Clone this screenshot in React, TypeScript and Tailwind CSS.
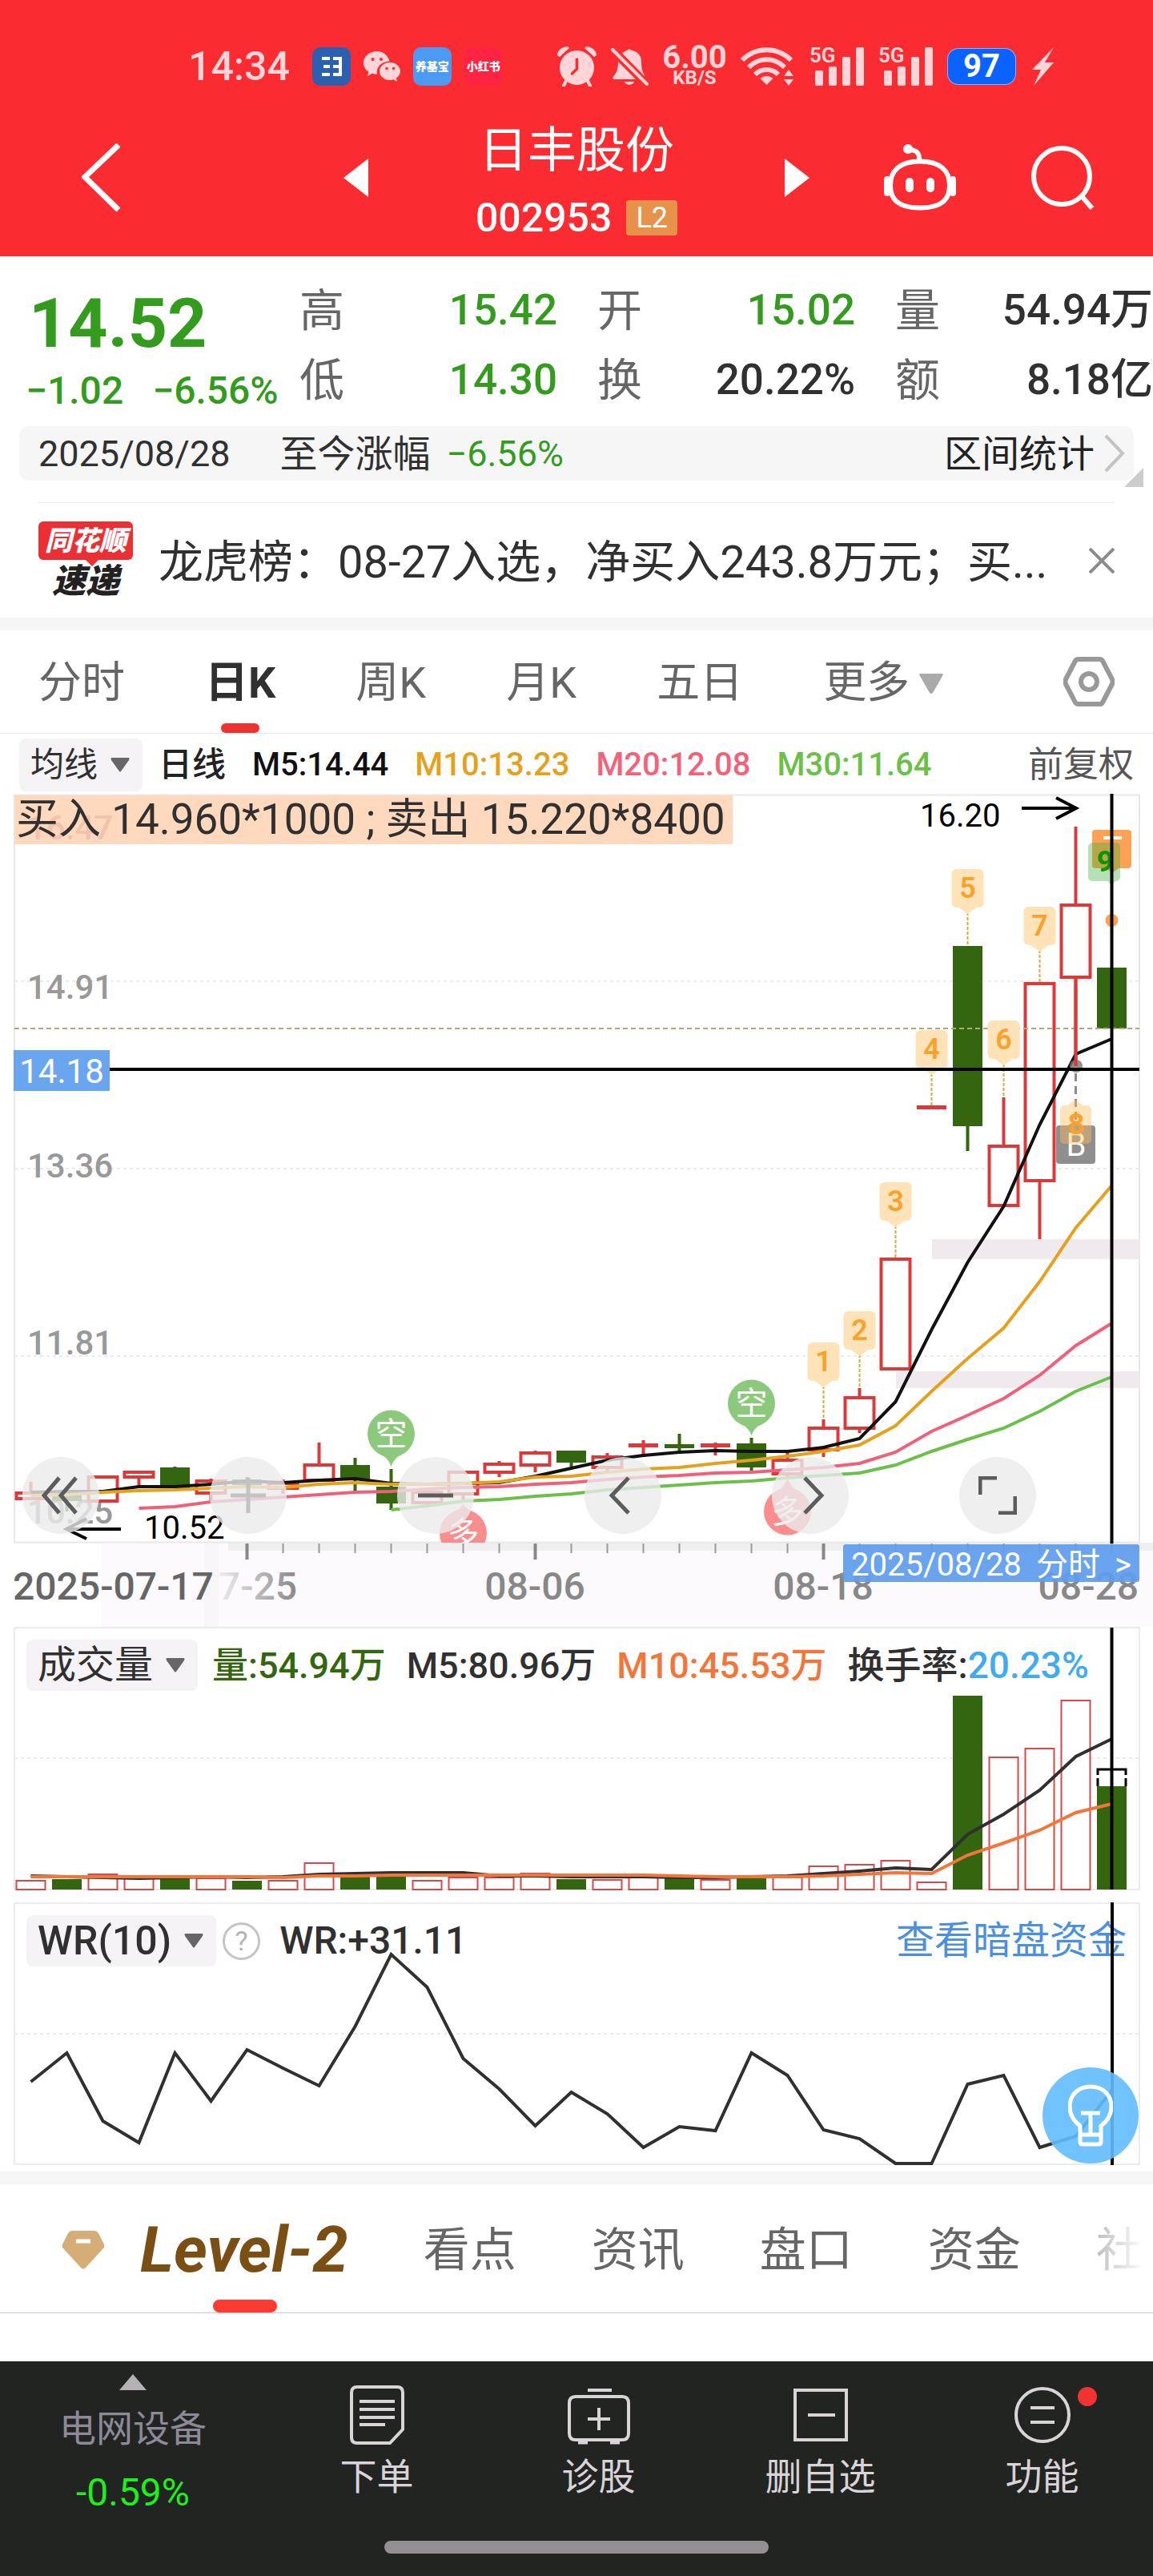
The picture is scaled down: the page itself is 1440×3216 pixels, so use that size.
import type { ReactNode } from "react";
import { clsx } from "clsx";

const RED = "#dc3a3a";
const GREEN = "#33660f";

type Candle = {
  kind: "up" | "down" | "flatUp" | "flatDown";
  top: number;
  bottom: number;
  high?: number;
  low?: number;
};

// vertical positions in chart units, one entry per trading day
const candles: Candle[] = [
  { kind: "up", top: 1862, bottom: 1873, high: 1850 },
  { kind: "down", top: 1866, bottom: 1874, low: 1887 },
  { kind: "up", top: 1842, bottom: 1876 },
  { kind: "up", top: 1836, bottom: 1846, low: 1856 },
  { kind: "down", top: 1832, bottom: 1858, high: 1831 },
  { kind: "up", top: 1847, bottom: 1866, high: 1846, low: 1873 },
  { kind: "down", top: 1847, bottom: 1854, high: 1844, low: 1857 },
  { kind: "up", top: 1850, bottom: 1860, high: 1847, low: 1865 },
  { kind: "up", top: 1827, bottom: 1850, high: 1801 },
  { kind: "down", top: 1829, bottom: 1848, high: 1820, low: 1862 },
  { kind: "down", top: 1856, bottom: 1877, high: 1834, low: 1885 },
  { kind: "up", top: 1861, bottom: 1878, high: 1859, low: 1882 },
  { kind: "up", top: 1836, bottom: 1867, low: 1873 },
  { kind: "up", top: 1826, bottom: 1840, high: 1824, low: 1844 },
  { kind: "up", top: 1812, bottom: 1831, high: 1811, low: 1838 },
  { kind: "down", top: 1811, bottom: 1826, low: 1832 },
  { kind: "up", top: 1817, bottom: 1834, high: 1814, low: 1837 },
  { kind: "flatUp", top: 1804, bottom: 1804, high: 1798, low: 1819 },
  { kind: "flatDown", top: 1805, bottom: 1805, high: 1790, low: 1815 },
  { kind: "flatUp", top: 1804, bottom: 1804, high: 1801, low: 1817 },
  { kind: "down", top: 1802, bottom: 1832, high: 1795, low: 1836 },
  { kind: "up", top: 1821, bottom: 1842, high: 1813, low: 1845 },
  { kind: "up", top: 1781, bottom: 1812, high: 1772, low: 1819 },
  { kind: "up", top: 1743, bottom: 1785, high: 1733, low: 1789 },
  { kind: "up", top: 1570, bottom: 1711 },
  { kind: "flatUp", top: 1382, bottom: 1382 },
  { kind: "down", top: 1181, bottom: 1406, low: 1437 },
  { kind: "up", top: 1429, bottom: 1507, high: 1370 },
  { kind: "up", top: 1226, bottom: 1476, low: 1547 },
  { kind: "up", top: 1128, bottom: 1222, high: 1032, low: 1331 },
  { kind: "down", top: 1208, bottom: 1284 }
];

const ma5 = [1863, 1862, 1862, 1856, 1856, 1853, 1849, 1851, 1848, 1846, 1852, 1853, 1852, 1851, 1843, 1833, 1823, 1817, 1813, 1811, 1812, 1812, 1807, 1796, 1750, 1660, 1576, 1506, 1404, 1316, 1297];
const ma10 = [1867, 1866, 1863, 1861, 1860, 1858, 1856, 1857, 1853, 1851, 1853, 1853, 1852, 1850, 1844, 1843, 1838, 1834, 1832, 1827, 1823, 1818, 1812, 1804, 1780, 1737, 1696, 1658, 1600, 1533, 1480];
const ma20 = [1883, 1881, 1875, 1872, 1869, 1866, 1863, 1862, 1859, 1857, 1856, 1853, 1851, 1847, 1844, 1842, 1839, 1838, 1835, 1832, 1827, 1813, 1787, 1767, 1746, 1717, 1680, 1652];
const ma30 = [1885, 1880, 1874, 1872, 1868, 1865, 1860, 1857, 1854, 1851, 1849, 1845, 1842, 1839, 1829, 1812, 1797, 1783, 1762, 1737, 1719];

const volumes = [2347, 2346, 2339, 2344, 2344, 2344, 2348, 2347, 2325, 2342, 2342, 2347, 2343, 2343, 2338, 2346, 2346, 2343, 2343, 2346, 2344, 2343, 2329, 2327, 2322, 2349, 2117, 2193, 2182, 2122, 2230];
const fallingVolumes = [1, 4, 6, 9, 10, 15, 18, 20, 26, 30];
const volMa5 = [2342, 2343, 2344, 2345, 2344, 2343, 2344, 2343, 2340, 2339, 2338, 2338, 2338, 2342, 2342, 2343, 2343, 2343, 2344, 2344, 2343, 2342, 2339, 2336, 2332, 2334, 2290, 2265, 2235, 2193, 2171];
const volMa10 = [2343, 2343, 2343, 2343, 2343, 2343, 2343, 2344, 2342, 2342, 2341, 2341, 2341, 2341, 2341, 2341, 2341, 2341, 2342, 2343, 2343, 2343, 2342, 2340, 2338, 2339, 2316, 2301, 2285, 2263, 2252];
const wr = [2599, 2563, 2648, 2675, 2563, 2623, 2559, 2582, 2604, 2530, 2440, 2481, 2570, 2608, 2654, 2612, 2639, 2681, 2655, 2660, 2563, 2591, 2659, 2670, 2701, 2701, 2602, 2591, 2681, 2667, 2610];

const counts = [
  { n: 1, day: 22, y: 1676, end: 1772 },
  { n: 2, day: 23, y: 1637, end: 1733 },
  { n: 3, day: 24, y: 1476, end: 1570 },
  { n: 4, day: 25, y: 1286, end: 1381 },
  { n: 5, day: 26, y: 1085, end: 1181 },
  { n: 6, day: 27, y: 1274, end: 1370 },
  { n: 7, day: 28, y: 1132, end: 1227 }
];

const dayX = (i: number) => 38.5 + i * 45;

const points = (values: number[], start = 0) => values.map((y, i) => `${dayX(i + start)},${y}`).join(" ");

function StatusBar() {
  return (
    <div className="flex h-[124px] items-start justify-between pt-[58px] pr-[123px] pl-[235px] text-[#ffd5d8]">
      <div className="flex h-[50px] items-center gap-4">
        <span className="mr-3 text-[50px] leading-[50px] font-medium">14:34</span>
        <svg className="size-12" viewBox="0 0 48 48">
          <rect width="48" height="48" rx="10" fill="#2b5fb0" />
          <path d="M12 14h10M14 24h8M12 34h10M26 14h9v20h-9M26 24h9" stroke="#fff" strokeWidth="4" fill="none" />
        </svg>
        <svg className="h-[38px] w-[46px]" viewBox="0 0 46 38" fill="currentColor">
          <path d="M17 0C7.500 0 0 6.500 0 14.500c0 4.500 2.500 8.500 6.500 11.200L5 31l6-3.200c2 .6 4 .9 6 .9-1.800-8.500 5-16 15.500-16C31 5.500 24.800 0 17 0z" />
          <path d="M46 25c0-6.200-6-11-13-11s-13 4.800-13 11 6 11 13 11c1.600 0 3.200-.3 4.600-.8L42 38l-1.200-4.500C44 31.500 46 28.500 46 25z" />
          <g fill="#fa2c32">
            <circle cx="11.500" cy="10" r="2" />
            <circle cx="22" cy="10" r="2" />
            <circle cx="29" cy="21.500" r="1.800" />
            <circle cx="37.500" cy="21.500" r="1.800" />
          </g>
        </svg>
        <span className="flex size-12 items-center justify-center rounded-[10px] bg-[#4b9bf5] text-[14px] leading-none font-black text-white">养基宝</span>
        <span className="flex size-12 items-center justify-center rounded-[10px] bg-[#ff2442] text-[14px] leading-none font-black text-white">小红书</span>
      </div>

      <div className="flex h-[50px] items-center gap-[18px]">
        <svg className="h-[50px] w-[49px]" viewBox="0 0 49 50" fill="currentColor">
          <circle cx="24.500" cy="26.500" r="21.500" />
          <path d="M0 11C0 5 6 0 13 0l2 2L3 13zM49 11C49 5 43 0 36 0l-2 2 12 11z" />
          <path d="M11 43l-3 6M38 43l3 6" stroke="currentColor" strokeWidth="4" strokeLinecap="round" />
          <path d="M24.500 16v12l-6 6" stroke="#fa2c32" strokeWidth="3.500" fill="none" strokeLinecap="round" />
        </svg>
        <svg className="h-[47px] w-[47px]" viewBox="0 0 47 47" fill="currentColor">
          <path d="M18 4c1-1 2-1.200 3-1.400a2.500 2.500 0 0 1 4 0C34 4.500 38 10 38 17c0 8 1 12 4 17v3L11 8zM9 17l22 22H4c-2 0-2-3-.5-4C8 30 9 24 9 17zM17 42h12c-1.500 5-10.500 5-12 0z" />
          <path d="M5 0l42 43" stroke="#fa2c32" strokeWidth="4" />
          <path d="M2 2l43 43" stroke="currentColor" strokeWidth="4" strokeLinecap="round" />
        </svg>
        <div className="flex w-[79px] flex-col items-center font-bold">
          <span className="text-[40px] leading-[28px]">6.00</span>
          <span className="text-[24px] leading-[22px]">KB/S</span>
        </div>
        <svg className="h-12 w-[68px]" viewBox="0 0 68 48" fill="none" stroke="currentColor" strokeWidth="6">
          <path d="M2 16C19-1 46-1 63 16M10 25C23 12 42 12 55 25M18 34c8-8 21-8 29 0" />
          <path d="M32.500 47l-8-8c5-4 11-4 16 0zM54 36l6-8 6 8zM54 40h12l-6 8z" fill="currentColor" stroke="none" />
        </svg>
        <Signal />
        <Signal />
        <div className="flex h-[46px] w-[86px] items-center justify-center rounded-[14px] border border-white/50 bg-[#0a63ff] text-[40px] leading-none font-bold text-white">97</div>
        <svg className="h-12 w-[30px]" viewBox="0 0 30 48" fill="currentColor">
          <path d="M29 0L2 28h11L4 48l25-29H18z" />
        </svg>
      </div>
    </div>
  );
}

function Signal() {
  return (
    <svg className="h-[66px] w-[68px]" viewBox="0 -8 68 66" fill="currentColor">
      <text x="0" y="20" fontSize="26" fontWeight="600">5G</text>
      <rect x="7" y="30" width="10" height="19" rx="2" />
      <rect x="24" y="25" width="10" height="24" rx="2" />
      <rect x="41" y="13" width="10" height="36" rx="2" />
      <rect x="58" y="1" width="10" height="48" rx="2" />
    </svg>
  );
}

function Header() {
  return (
    <header className="bg-[#fa2c32] text-white">
      <StatusBar />
      <div className="grid h-[196px] grid-cols-[1fr_260px_1fr] items-center">
        <div className="flex items-center justify-between pr-[130px] pl-[102px]">
          <button type="button" aria-label="返回">
            <svg className="h-[86px] w-[48px]" viewBox="0 0 48 86" fill="none" stroke="currentColor" strokeWidth="7">
              <path d="M46 2L4 42l42 41" />
            </svg>
          </button>
          <button type="button" aria-label="上一只">
            <svg className="h-12 w-[31px]" viewBox="0 0 31 48" fill="currentColor">
              <path d="M31 0v48L0 24z" />
            </svg>
          </button>
        </div>
        <div className="flex flex-col items-center self-end pb-1">
          <h1 className="text-[61px] leading-[80px]">日丰股份</h1>
          <p className="flex h-[88px] items-center gap-[18px] text-[50px] leading-[50px] font-medium">
            002953
            <span className="rounded-[4px] bg-[#e6924a] px-3 text-[36px] leading-[44px] font-normal">L2</span>
          </p>
        </div>
        <div className="flex items-center justify-between pr-[73px] pl-[130px]">
          <button type="button" aria-label="下一只">
            <svg className="h-12 w-[31px]" viewBox="0 0 31 48" fill="currentColor">
              <path d="M0 0v48l31-24z" />
            </svg>
          </button>
          <button type="button" aria-label="智能助手">
            <svg className="h-[84px] w-[92px]" viewBox="0 0 92 84" fill="none" stroke="currentColor" strokeWidth="6">
              <path d="M46 21.500c27 0 37 13 37 30s-9 28-37 28-37-11-37-28 10-30 37-30z" />
              <path d="M45 21c1-9-3-14-12-14" />
              <circle cx="31" cy="6" r="6" fill="currentColor" stroke="none" />
              <path d="M33 47v8M59 47v8" strokeWidth="10" strokeLinecap="round" />
              <path d="M5 44v17M87 44v17" strokeWidth="8" strokeLinecap="round" />
            </svg>
          </button>
          <button type="button" aria-label="搜索">
            <svg className="h-20 w-20" viewBox="0 0 80 80" fill="none" stroke="currentColor" strokeWidth="6">
              <circle cx="39" cy="38" r="35" />
              <path d="M64 63l13 15" />
            </svg>
          </button>
        </div>
      </div>
    </header>
  );
}

const stats = [
  { label: "高", value: "15.42", green: true },
  { label: "开", value: "15.02", green: true },
  { label: "量", value: "54.94万", green: false },
  { label: "低", value: "14.30", green: true },
  { label: "换", value: "20.22%", green: false },
  { label: "额", value: "8.18亿", green: false }
];

function Quote() {
  return (
    <section>
      <div className="flex h-[212px]">
        <div className="w-[374px] shrink-0 pt-8 pl-8 text-[#339b1e]">
          <p className="pl-1 text-[86px] leading-[104px] font-bold">14.52</p>
          <p className="flex gap-9 text-[48px] leading-[64px] font-medium whitespace-nowrap">
            <span>−1.02</span>
            <span>−6.56%</span>
          </p>
        </div>
        <dl className="grid flex-1 auto-rows-[87px] grid-cols-3 gap-x-[50px] pt-6">
          {stats.map((item) => (
            <div className="flex items-center justify-between" key={item.label}>
              <dt className="text-[56px] leading-none text-[#666]">{item.label}</dt>
              <dd className={clsx("text-[53px] leading-none font-medium whitespace-nowrap", item.green ? "text-[#339b1e]" : "text-[#303030]")}>{item.value}</dd>
            </div>
          ))}
        </dl>
      </div>

      <div className="relative mx-6 flex h-[68px] items-center rounded-xl bg-[#f6f6f6] pr-[11px] pl-6 text-[45px] leading-none text-[#303030]">
        <span>2025/08/28</span>
        <span className="ml-[62px] text-[47px]">至今涨幅</span>
        <span className="ml-5 text-[#339b1e]">−6.56%</span>
        <a className="ml-auto flex items-center gap-3 text-[47px] text-[#222]" href="#range">
          区间统计
          <svg className="h-12 w-[26px]" viewBox="0 0 26 48" fill="none" stroke="#c4c4c4" strokeWidth="4">
            <path d="M2 2l21 22L2 46" />
          </svg>
        </a>
        <svg className="absolute -right-3 -bottom-2 size-6" viewBox="0 0 24 24">
          <path d="M24 0v24H0z" fill="#ccc" />
        </svg>
      </div>

      <div className="mx-12 mt-[27px] flex h-[144px] items-center border-t border-[#ededed]">
        <div className="flex w-[118px] shrink-0 flex-col items-center italic">
          <div className="relative rounded-md bg-[#ec2f33] px-2 text-[34px] leading-[48px] font-black text-white">
            同花顺
            <svg className="absolute top-full left-1/2 h-2 w-4" viewBox="0 0 16 8">
              <path d="M0 0h16L8 8z" fill="#ec2f33" />
            </svg>
          </div>
          <span className="pt-1 text-[42px] leading-[46px] font-black text-[#222]">速递</span>
        </div>
        <a className="ml-8 min-w-0 flex-1 truncate pt-1 text-[56px] leading-[80px] text-[#303030]" href="#news">
          龙虎榜：08-27入选，净买入243.8万元；买...
        </a>
        <button className="ml-12" type="button" aria-label="关闭">
          <svg className="size-8" viewBox="0 0 32 32" stroke="#8a8a90" strokeWidth="4">
            <path d="M1 1l30 30M31 1L1 31" />
          </svg>
        </button>
      </div>
    </section>
  );
}

function PeriodTabs() {
  return (
    <nav className="flex h-[129px] items-center justify-between border-b border-[#e8e8e8] pr-12 pl-12 text-[54px] leading-none text-[#666]">
      <div className="flex h-full items-stretch gap-[100px]">
        <button className="pt-1" type="button">分时</button>
        <button className="relative pt-1 font-bold text-[#303030]" type="button">
          日K
          <span className="absolute bottom-0 left-1/2 h-3 w-12 -translate-x-1/2 rounded-full bg-[#ee3030]" />
        </button>
        <button className="pt-1" type="button">周K</button>
        <button className="pt-1" type="button">月K</button>
        <button className="pt-1" type="button">五日</button>
        <button className="flex items-center gap-3 pt-1" type="button" aria-haspopup="menu">
          更多
          <svg className="h-[25px] w-[30px]" viewBox="0 0 30 25">
            <path d="M2 0h26q3 0 1 3L17 24q-2 2-4 0L1 3q-2-3 1-3z" fill="#aaa" />
          </svg>
        </button>
      </div>
      <button type="button" aria-label="设置">
        <svg className="h-[62px] w-16" viewBox="0 0 64 62" fill="none" stroke="#999" strokeWidth="6">
          <path d="M19 3h26q3 0 4 2l12 23q1 3 0 6L49 57q-1 2-4 2H19q-3 0-4-2L3 34q-1-3 0-6L15 5q1-2 4-2z" />
          <circle cx="32" cy="31" r="10" />
        </svg>
      </button>
    </nav>
  );
}

function Picker({ label, value, className }: { label: string; value: string; className: string }) {
  return (
    <label className={clsx("relative flex items-center rounded-lg bg-[#f6f3f7] text-[#303030]", className)}>
      <select className="field-sizing-content appearance-none bg-transparent pr-[56px] pl-[14px] leading-[66px] outline-none" aria-label={label}>
        <option>{value}</option>
      </select>
      <svg className="pointer-events-none absolute right-4 h-[18px] w-6" viewBox="0 0 24 18">
        <path d="M1 0h22q1 1 0 3L13 17q-1 1-2 0L1 3q-1-2 0-3z" fill="#666" />
      </svg>
    </label>
  );
}

function Wick({ x, candle, color }: { x: number; candle: Candle; color: string }) {
  return (
    <>
      {candle.high ? <rect x={x - 2} y={candle.high} width="4" height={candle.top - candle.high} fill={color} /> : null}
      {candle.low ? <rect x={x - 2} y={candle.bottom} width="4" height={candle.low - candle.bottom} fill={color} /> : null}
    </>
  );
}

function CandleBar({ candle, x }: { candle: Candle; x: number }) {
  const color = candle.kind === "up" || candle.kind === "flatUp" ? RED : GREEN;

  return (
    <g>
      <Wick x={x} candle={candle} color={color} />
      {candle.kind === "up" ? (
        <rect x={x - 18} y={candle.top + 2} width="36" height={candle.bottom - candle.top - 4} fill="#fff" stroke={color} strokeWidth="4" />
      ) : null}
      {candle.kind === "down" ? <rect x={x - 18.5} y={candle.top} width="37" height={candle.bottom - candle.top} fill={color} /> : null}
      {candle.kind.startsWith("flat") ? <rect x={x - 18.5} y={candle.top - 2} width="37" height="5" fill={color} /> : null}
    </g>
  );
}

function Pin({ x, y, tip, text, color }: { x: number; y: number; tip: number; text: string; color: string }) {
  const dir = tip > y ? 1 : -1;

  return (
    <g>
      <circle cx={x} cy={y} r="29.500" fill={color} />
      <path d={`M${x - 18} ${y + dir * 22}Q${x - 3} ${y + dir * 30} ${x} ${tip}Q${x + 3} ${y + dir * 30} ${x + 18} ${y + dir * 22}z`} fill={color} />
      <text x={x} y={y + 14} fontSize="40" fill="#fff" textAnchor="middle">{text}</text>
    </g>
  );
}

function CandleChart() {
  return (
    <svg className="block w-full" viewBox="0 991 1440 1040" role="img" aria-label="日K线">
      <defs>
        <clipPath id="plot">
          <rect x="18" y="992" width="1405" height="934" />
        </clipPath>
        <linearGradient id="fade" x1="0" x2="1" y1="0" y2="0">
          <stop offset="0" stopColor="#eee" />
          <stop offset="1" stopColor="#888" />
        </linearGradient>
      </defs>

      <rect x="127" y="1926" width="1313" height="105" fill="#fdfafe" />
      <rect x="285" y="1926" width="1155" height="10" fill="#efefef" />
      <rect x="255" y="1926" width="18" height="105" fill="#f8f6f9" />
      <path d="M18 992.500h1405v933H18z" fill="#fff" stroke="#e8e8e8" strokeWidth="2" />
      <path d="M18 1225h1405M18 1459h1405M18 1693h1405" stroke="#ebebeb" strokeWidth="2" strokeDasharray="4 4" />

      <rect x="1164" y="1547" width="259" height="25" fill="#eeeaee" />
      <rect x="1119" y="1712" width="304" height="21" fill="#eeeaee" />

      <g fontSize="42" fontWeight="500" fill="#999">
        <text x="34" y="1247">14.91</text>
        <text x="34" y="1470">13.36</text>
        <text x="34" y="1691">11.81</text>
        <text x="34" y="1902">10.25</text>
      </g>

      <rect x="18" y="993" width="897" height="61" fill="#ffd9bd" />
      <text x="34" y="1048" fontSize="42" fontWeight="500" fill="#efc3ac">16.47</text>
      <text x="20" y="1041" fontSize="53" fill="#303030">买入 14.960*1000 ; 卖出 15.220*8400</text>

      <g clipPath="url(#plot)">
        {candles.map((candle, i) => (
          <CandleBar candle={candle} key={i} x={dayX(i)} />
        ))}
        <path d="M18 1284h1405" stroke="#b5a878" strokeWidth="2" strokeDasharray="6 4" />
        <g fill="none" strokeWidth="4">
          <polyline points={points(ma30, 10)} stroke="#6cbf4b" />
          <polyline points={points(ma20, 3)} stroke="#ee6178" />
          <polyline points={points(ma5)} stroke="#111" />
          <polyline points={points(ma10)} stroke="#e5a11c" />
        </g>
        <Pin x={488.500} y={1790} tip={1831} text="空" color="#8cc97c" />
        <Pin x={938.500} y={1752} tip={1792} text="空" color="#8cc97c" />
        <Pin x={578.500} y={1914} tip={1878} text="多" color="#fa8d8d" />
        <Pin x={983.500} y={1887} tip={1845} text="多" color="#fa8d8d" />
      </g>

      {counts.map((item) => {
        const x = dayX(item.day);
        return (
          <g key={item.n}>
            <path d={`M${x} ${item.y + 54}V${item.end}`} stroke="#d9a93a" strokeWidth="2" strokeDasharray="4 2" />
            <rect x={x - 20} y={item.y} width="40" height="48" rx="6" fill="#ffe3b8" />
            <path d={`M${x - 11} ${item.y + 48}h22l-11 8z`} fill="#ffe3b8" />
            <text x={x} y={item.y + 36} fontSize="36" fontWeight="600" fill="#f9a22b" textAnchor="middle">{item.n}</text>
          </g>
        );
      })}

      {/* today's marks */}
      <path d="M1368 1036h41q4 0 4 4v40q0 4-4 4h-12l-8 6-8-6h-13q-4 0-4-4v-40q0-4 4-4z" fill="#ffa155" />
      <path d="M1378 1046h23" stroke="#fff" strokeWidth="4" />
      <path d="M1365 1052h28q6 0 6 6v36q0 6-6 6l-4 5-6-5h-18q-6 0-6-6v-36q0-6 6-6z" fill="#2eae34" fillOpacity=".36" />
      <text x="1380" y="1088" fontSize="36" fontWeight="700" fill="#0c9408" textAnchor="middle">9</text>
      <circle cx="1388.500" cy="1149" r="8" fill="#ffa155" />

      {/* buy mark of the previous day */}
      <circle cx="1344" cy="1331" r="8" fill="#777" fillOpacity=".8" />
      <path d="M1343.500 1222v109" stroke={RED} strokeWidth="4" />
      <path d="M1343.500 1340v62" stroke="#8a8a8a" strokeWidth="3" strokeDasharray="10 6" />
      <path d="M1323 1405h11l9-6 9 6h12q4 0 4 4v40q0 4-4 4h-41q-4 0-4-4v-40q0-4 4-4z" fill="#8f8f8f" />
      <text x="1344" y="1443" fontSize="40" fill="#fff" textAnchor="middle">B</text>
      <path d="M1330 1380h3l10-7 10 7h4q6 0 6 6v36q0 6-6 6h-27q-6 0-6-6v-36q0-6 6-6z" fill="#ffbc5c" fillOpacity=".42" />
      <text x="1344" y="1416" fontSize="36" fontWeight="700" fill="#f9a22b" textAnchor="middle">8</text>

      <g fontSize="40" fill="#000">
        <text x="1149" y="1032">16.20</text>
        <text x="180" y="1921">10.52</text>
      </g>
      <path d="M1276 1009h66M1319 996l25 13-25 13M151 1909H85M108 1896l-25 13 25 12" fill="none" stroke="#000" strokeWidth="4" />

      {Array.from({ length: 24 }, (_, i) => i + 7).map((day) => (
        <path d={`M${dayX(day)} 1927v12`} key={day} stroke="#999" strokeWidth="2" />
      ))}
      <path d="M308.500 1927v20M668.500 1927v20M1028.500 1927v20" stroke="#888" strokeWidth="4" />

      <g fontSize="48" fontWeight="500" fill="#888">
        <text x="371" y="1997" fill="url(#fade)" textAnchor="end">7-25</text>
        <text x="16" y="1997" fill="#666">2025-07-17</text>
        <text x="668" y="1997" textAnchor="middle">08-06</text>
        <text x="1028" y="1997" textAnchor="middle">08-18</text>
        <text x="1422" y="1997" textAnchor="end">08-28</text>
      </g>

      {/* crosshair */}
      <path d="M137 1335h1286M1388.500 991v936" stroke="#000" strokeWidth="4" />
      <rect x="17" y="1311" width="120" height="51" fill="#6aa5f0" />
      <text x="77" y="1352" fontSize="42" fill="#fff" textAnchor="middle">14.18</text>
      <rect x="1053" y="1928" width="370" height="47" rx="3" fill="#5f9ded" fillOpacity=".93" />
      <g fontSize="40" fill="#fff">
        <text x="1063" y="1967">2025/08/28</text>
        <text x="1294" y="1967">分时</text>
        <text x="1392" y="1967">&gt;</text>
      </g>
    </svg>
  );
}

function RoundButton({ label, children }: { label: string; children: ReactNode }) {
  return (
    <button className="flex size-24 items-center justify-center rounded-full bg-[#ebebeb]/80" type="button" aria-label={label}>
      <svg className="size-12" viewBox="0 0 48 48" fill="none" stroke="#5c5c5c" strokeWidth="5">
        {children}
      </svg>
    </button>
  );
}

function PricePanel() {
  return (
    <section>
      <div className="flex h-[75px] items-center justify-between px-6 pt-[2px] text-[42px] leading-none">
        <div className="flex items-center gap-[33px] text-[40px] font-medium whitespace-nowrap">
          <div className="flex items-center gap-5 text-[42px] text-[#222]">
            <Picker label="主图指标" value="均线" className="h-[66px] font-normal" />
            <span>日线</span>
          </div>
          <span className="text-[#111]">M5:14.44</span>
          <span className="text-[#e5a11c]">M10:13.23</span>
          <span className="text-[#f2637a]">M20:12.08</span>
          <span className="text-[#6cc048]">M30:11.64</span>
        </div>
        <button className="text-[44px] text-[#555]" type="button">前复权</button>
      </div>
      <div className="relative">
        <CandleChart />
        <div className="absolute bottom-[116px] left-7 flex gap-[138px]">
          <RoundButton label="最早">
            <path d="M22 2L3 24l19 22M43 2L24 24l19 22" />
          </RoundButton>
          <RoundButton label="放大">
            <path d="M24 2v44M2 24h44" stroke="#c2c4c2" />
          </RoundButton>
          <RoundButton label="缩小">
            <path d="M2 24h44" />
          </RoundButton>
          <RoundButton label="向前">
            <path d="M31 2L10 24l21 22" />
          </RoundButton>
          <RoundButton label="向后">
            <path d="M17 2l21 22-21 22" />
          </RoundButton>
          <RoundButton label="全屏">
            <path d="M23 2H2v21M25 46h21V25" />
          </RoundButton>
        </div>
      </div>
    </section>
  );
}

function VolumePanel() {
  return (
    <section className="relative text-[45px] leading-none">
      <svg className="block w-full" viewBox="0 2031 1440 344" role="img" aria-label="成交量">
        <path d="M18 2032h1405v327H18z" fill="#fff" stroke="#ebebeb" strokeWidth="2" />
        <path d="M18 2195h1405" stroke="#ebebeb" strokeWidth="2" strokeDasharray="4 4" />
        {volumes.map((top, i) =>
          fallingVolumes.includes(i) ? (
            <rect key={i} x={dayX(i) - 18.5} y={top} width="37" height={2359 - top} fill={GREEN} />
          ) : (
            <rect key={i} x={dayX(i) - 18} y={top + 1} width="36" height={2358 - top} fill="#fff" stroke="#d24a4a" strokeWidth="2" />
          )
        )}
        <path d="M1371 2230v-10M1371 2216v-7h35v7M1406 2220v10" fill="none" stroke="#000" strokeWidth="3" />
        <polyline points={points(volMa5)} fill="none" stroke="#303030" strokeWidth="4" />
        <polyline points={points(volMa10)} fill="none" stroke="#f2763c" strokeWidth="4" />
        <path d="M1388.500 2032v327" stroke="#000" strokeWidth="4" />
      </svg>
      <div className="absolute top-4 left-[33px] flex items-center gap-[26px] font-medium whitespace-nowrap text-[#303030]">
        <div className="flex items-center gap-[18px]">
          <Picker label="副图指标一" value="成交量" className="h-16 text-[48px] font-normal" />
          <span className="text-[#33660f]">量:54.94万</span>
        </div>
        <span>M5:80.96万</span>
        <span className="text-[#f2763c]">M10:45.53万</span>
        <span className="text-[46px]">
          换手率:<span className="text-[#42aaee]">20.23%</span>
        </span>
      </div>
    </section>
  );
}

function WrPanel() {
  return (
    <section className="relative text-[48px] leading-none">
      <svg className="block w-full" viewBox="0 2375 1440 336" role="img" aria-label="WR指标">
        <path d="M18 2376h1405v326H18z" fill="#fff" stroke="#ebebeb" strokeWidth="2" />
        <path d="M18 2539h1405" stroke="#ebebeb" strokeWidth="2" strokeDasharray="4 4" />
        <polyline points={points(wr)} fill="none" stroke="#303030" strokeWidth="4" />
      </svg>
      <div className="absolute top-4 right-[33px] left-[33px] flex items-center text-[#303030]">
        <Picker label="副图指标二" value="WR(10)" className="h-16 text-[50px] font-medium" />
        <button className="ml-2 flex size-[47px] items-center justify-center rounded-full border-3 border-[#c4c4c4] text-[34px] text-[#b4b4b4]" type="button" aria-label="指标说明">?</button>
        <span className="ml-6 font-medium">WR:+31.11</span>
        <a className="ml-auto text-[#4a8fe0]" href="#fund">查看暗盘资金</a>
      </div>
      <span className="absolute top-0 right-[49px] bottom-2 w-1 bg-black" />
      <button className="absolute right-[18px] bottom-[10px] flex size-[120px] items-center justify-center rounded-full bg-[#62bcff]/90" type="button" aria-label="提示">
        <svg className="h-[78px] w-14" viewBox="0 0 56 78" fill="none" stroke="#fff" strokeWidth="5" strokeLinejoin="round">
          <path d="M15 52C7 46 2 38 2 28 2 13 13 3 28 3s26 10 26 25c0 10-5 18-13 24v20q0 3-3 3H18q-3 0-3-3z" />
          <path d="M16 36h24M28 36v25M16 63h24" />
        </svg>
      </button>
    </section>
  );
}

function InfoTabs() {
  return (
    <nav className="relative flex h-[161px] items-center gap-[94px] overflow-hidden border-b border-[#c8c8c8] pt-1 pl-[77px] text-[58px] leading-none whitespace-nowrap text-[#666]">
      <a className="relative flex h-full items-center gap-[44px] font-bold text-[#7a4f13] italic" href="#level2">
        <svg className="h-12 w-[54px]" viewBox="0 0 54 48">
          <path d="M13 0h28q3 0 5 3l7 14q1 3-1 5L30 46q-3 3-6 0L2 22q-2-2-1-5L8 3q2-3 5-3z" fill="#d5ad77" />
          <path d="M18 13h18" stroke="#fff" strokeWidth="5" />
        </svg>
        <span className="text-[80px]">Level-2</span>
        <span className="absolute bottom-0 left-[189px] h-4 w-20 rounded-full bg-[#ff3a30]" />
      </a>
      <a href="#views">看点</a>
      <a href="#info">资讯</a>
      <a href="#board">盘口</a>
      <a href="#funds">资金</a>
      <a href="#community">社区</a>
      <span className="pointer-events-none absolute inset-y-0 right-0 w-[110px] bg-linear-to-r from-white/30 to-white to-90%" />
    </nav>
  );
}

function NavItem({ label, dot = false, children }: { label: string; dot?: boolean; children: ReactNode }) {
  return (
    <button className="flex flex-col items-center pt-7 text-[46px] leading-[56px] text-[#d8d4d8]" type="button">
      <span className="relative">
        <svg className="h-20 w-20" viewBox="0 0 80 80" fill="none" stroke="currentColor" strokeWidth="4">
          {children}
        </svg>
        {dot ? <span className="absolute top-1 -right-7 size-6 rounded-full bg-[#f03434]" /> : null}
      </span>
      <span className="pt-2">{label}</span>
    </button>
  );
}

function BottomNav() {
  return (
    <footer className="bg-[#222422] pb-7">
      <div className="grid h-[224px] grid-cols-[332fr_277fr_277fr_277fr_277fr]">
        <a className="flex flex-col items-center pt-4 text-[46px] leading-[56px] text-[#8c8a96]" href="#sector">
          <svg className="h-5 w-[34px]" viewBox="0 0 34 20">
            <path d="M17 0l17 20H0z" fill="#b5b1b5" />
          </svg>
          <span className="pt-5">电网设备</span>
          <span className="pt-6 text-[48px] text-[#1ef01e]">-0.59%</span>
        </a>
        <NavItem label="下单">
          <path d="M15 4h50q7 0 7 7v46L56 74H15q-7 0-7-7V11q0-7 7-7z" />
          <path d="M18 22h44M18 32h44M18 42h44M18 51h32" />
        </NavItem>
        <NavItem label="诊股">
          <path d="M11 16h58q8 0 8 8v38q0 8-8 8H11q-8 0-8-8V24q0-8 8-8zM26 8h30M40 30v28M26 44h28" />
          <path d="M14 73h12M54 73h12" strokeWidth="5" />
        </NavItem>
        <NavItem label="删自选">
          <path d="M8 8h64v62H8zM24 39h34" />
        </NavItem>
        <NavItem label="功能" dot>
          <circle cx="40" cy="39" r="33" />
          <path d="M25 30h30M25 48h30" />
        </NavItem>
      </div>
      <div className="mx-auto h-4 w-1/3 rounded-full bg-[#938f93]" />
    </footer>
  );
}

export default function App() {
  return (
    <div className="w-full overflow-hidden bg-white font-['Roboto','Noto_Sans_CJK_SC',sans-serif]">
      <Header />
      <Quote />
      <div className="h-4 bg-[#f6f6f6]" />
      <PeriodTabs />
      <PricePanel />
      <VolumePanel />
      <WrPanel />
      <div className="h-4 bg-[#f6f6f6]" />
      <InfoTabs />
      <div className="h-[60px]" />
      <BottomNav />
    </div>
  );
}
